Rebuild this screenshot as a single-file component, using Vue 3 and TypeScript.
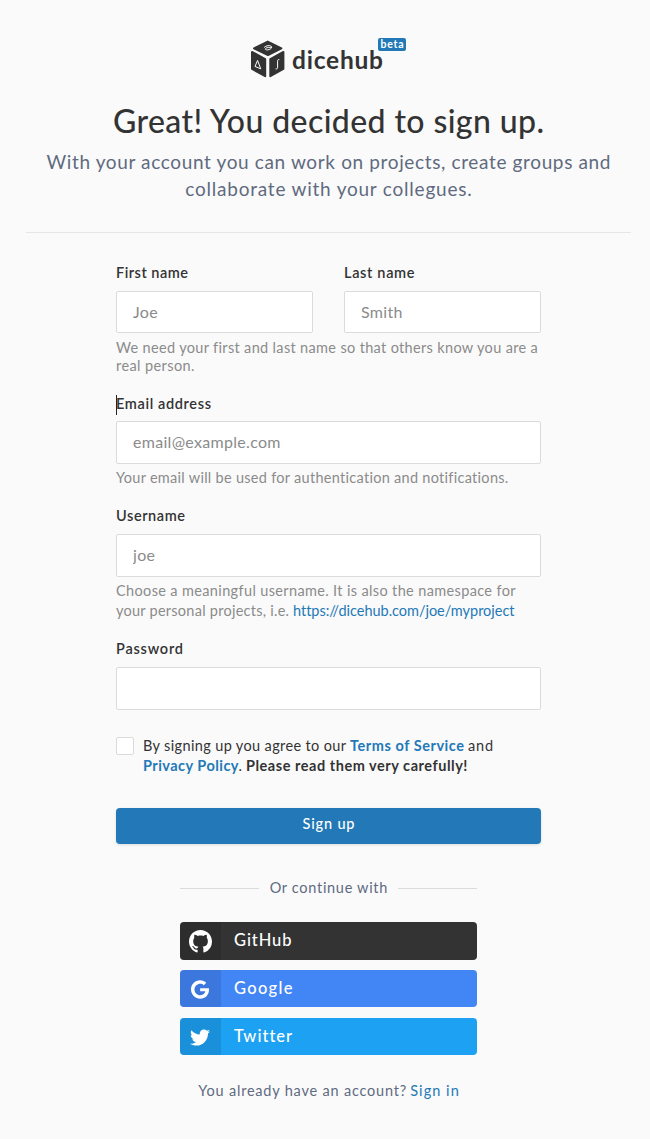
<script setup lang="ts">
import type { Directive } from 'vue'

// Tracks a single line of text out (or in) to a given width in px.
const vFit: Directive<HTMLElement, number> = {
  mounted(el, { value }) {
    const count = (el.textContent ?? '').length
    const natural = el.getBoundingClientRect().width
    if (count < 2 || !natural) return
    const spacing = (value - natural) / (count - 1)
    el.style.letterSpacing = `${spacing}px`
    el.style.marginRight = `${-spacing}px`
  },
}

interface Provider { name: string; key: string; width: number; box: string; path: string }

const providers: Provider[] = [
  {
    name: 'GitHub', key: 'github', width: 57.5, box: '0 0 16 16',
    path: 'M8 0C3.58 0 0 3.58 0 8c0 3.54 2.29 6.53 5.47 7.59.4.07.55-.17.55-.38 0-.19-.01-.82-.01-1.49-2.01.37-2.53-.49-2.69-.94-.09-.23-.48-.94-.82-1.13-.28-.15-.68-.52-.01-.53.63-.01 1.08.58 1.23.82.72 1.21 1.87.87 2.33.66.07-.52.28-.87.51-1.07-1.78-.2-3.64-.89-3.64-3.95 0-.87.31-1.59.82-2.15-.08-.2-.36-1.02.08-2.12 0 0 .67-.21 2.2.82.64-.18 1.32-.27 2-.27s1.36.09 2 .27c1.53-1.04 2.2-.82 2.2-.82.44 1.1.16 1.92.08 2.12.51.56.82 1.27.82 2.15 0 3.07-1.87 3.75-3.65 3.95.29.25.54.73.54 1.48 0 1.07-.01 1.93-.01 2.2 0 .21.15.46.55.38A8.01 8.01 0 0 0 16 8c0-4.42-3.58-8-8-8z',
  },
  {
    name: 'Google', key: 'google', width: 58.5, box: '0 8 488 496',
    path: 'M488 261.8C488 403.3 391.1 504 248 504 110.8 504 0 393.2 0 256S110.8 8 248 8c66.8 0 123 24.5 166.3 64.9l-67.5 64.9C258.5 52.6 94.3 116.6 94.3 256c0 86.5 69.1 156.6 153.7 156.6 98.2 0 135-70.4 140.8-106.9H248v-85.3h236.1c2.3 12.7 3.9 24.9 3.9 41.4z',
  },
  {
    name: 'Twitter', key: 'twitter', width: 57.5, box: '0 48 512 416',
    path: 'M459.37 151.716c.325 4.548.325 9.097.325 13.645 0 138.72-105.583 298.558-298.558 298.558-59.452 0-114.68-17.219-161.137-47.106 8.447.974 16.568 1.299 25.34 1.299 49.055 0 94.213-16.568 130.274-44.832-46.132-.975-84.792-31.188-98.112-72.772 6.498.974 12.995 1.624 19.818 1.624 9.421 0 18.843-1.3 27.614-3.573-48.081-9.747-84.143-51.98-84.143-102.985v-1.299c13.969 7.797 30.214 12.67 47.431 13.319-28.264-18.843-46.781-51.005-46.781-87.391 0-19.492 5.197-37.36 14.294-52.954 51.655 63.675 129.3 105.258 216.365 109.807-1.624-7.797-2.599-15.918-2.599-24.04 0-57.828 46.782-104.934 104.934-104.934 30.213 0 57.502 12.67 76.67 33.137 23.715-4.548 46.456-13.32 66.599-25.34-7.798 24.366-24.366 44.833-46.132 57.827 21.117-2.273 41.584-8.122 60.426-16.243-14.292 20.791-32.161 39.308-52.628 54.253z',
  },
]
</script>

<template>
  <main class="page">
    <header class="header">
      <div class="brand">
        <svg class="cube" viewBox="0 0 36 40" width="36" height="40">
          <g fill="#333" stroke="#333" stroke-width="2" stroke-linejoin="round">
            <path d="M17.7 2.6 31.4 9.4 18 16 4 9.4Z" />
            <path d="M2 12.9 15.2 20.1V37.2L2 29.9Z" />
            <path d="M33.4 12.9 20.3 20.1V37.2L33.4 29.9Z" />
          </g>
          <g fill="none" stroke="#fff" stroke-width="1" stroke-linecap="round" stroke-linejoin="round">
            <path d="M14.4 8.2c1.5-1.7 5.4-2.1 6.9-.9 1.4 1.2-.8 3.2-3.6 3.6-2.3.2-3-.9-1.6-1.8 1.2-.7 3.3-.7 4.9-.3" />
            <path d="M7.4 21.8 5 27.4 10.4 29.7Z" />
            <path d="M29 20.6c-1.1-.3-1.4.4-1.4 1.5v6.1c0 1.3-.5 2-1.6 1.8" />
          </g>
        </svg>
        <span class="wordmark"><span v-fit="91" class="line">dicehub</span></span>
        <span class="beta"><span v-fit="23" class="line">beta</span></span>
      </div>
      <h1 class="title"><span v-fit="431" class="line">Great! You decided to sign up.</span></h1>
      <p class="subtitle">
        <span v-fit="564" class="line">With your account you can work on projects, create groups and</span><br>
        <span v-fit="286.5" class="line">collaborate with your collegues.</span>
      </p>
    </header>

    <form class="form" @submit.prevent>
      <div class="names">
        <div class="field">
          <label for="first"><span v-fit="72" class="line">First name</span></label>
          <input id="first" class="short" type="text" placeholder="Joe">
        </div>
        <div class="field">
          <label for="last"><span v-fit="70.5" class="line">Last name</span></label>
          <input id="last" class="short" type="text" placeholder="Smith">
        </div>
      </div>
      <p class="help tight">
        <span v-fit="421.5" class="line">We need your first and last name so that others know you are a</span><br>
        <span v-fit="78.5" class="line">real person.</span>
      </p>

      <div class="field email">
        <label for="email"><span v-fit="95" class="line">Email address</span></label>
        <i class="caret"></i>
        <input id="email" type="email" placeholder="email@example.com">
      </div>
      <p class="help"><span v-fit="393" class="line">Your email will be used for authentication and notifications.</span></p>

      <div class="field username">
        <label for="user"><span v-fit="69" class="line">Username</span></label>
        <input id="user" type="text" placeholder="joe">
      </div>
      <p class="help">
        <span v-fit="399.5" class="line">Choose a meaningful username. It is also the namespace for</span><br>
        <span class="row"><span v-fit="173" class="line">your personal projects, i.e.</span>
          <a v-fit="221" class="line">https://dicehub.com/joe/myproject</a></span>
      </p>

      <div class="field password">
        <label for="pass"><span v-fit="67" class="line">Password</span></label>
        <input id="pass" type="password">
      </div>

      <div class="terms">
        <span class="checkbox"></span>
        <div class="terms-text">
          <div class="row">
            <span v-fit="203" class="line">By signing up you agree to our</span>
            <a v-fit="114" class="line strong">Terms of Service</a>
            <span v-fit="25" class="line">and</span>
          </div>
          <div class="row">
            <span class="policy"><a v-fit="95.5" class="line strong">Privacy Policy</a><span>.</span></span>
            <span v-fit="221.5" class="line strong">Please read them very carefully!</span>
          </div>
        </div>
      </div>

      <button class="submit" type="submit"><span v-fit="52" class="line">Sign up</span></button>
    </form>

    <section class="social">
      <div class="divider"><span v-fit="118" class="line">Or continue with</span></div>
      <button v-for="p in providers" :key="p.key" class="provider" :class="p.key" type="button">
        <span class="icon">
          <svg :viewBox="p.box"><path :d="p.path" fill="#fff" /></svg>
        </span>
        <span class="name"><span v-fit="p.width" class="line">{{ p.name }}</span></span>
      </button>
    </section>

    <footer class="footer row">
      <span v-fit="208" class="line">You already have an account?</span>
      <a v-fit="48.5" class="line">Sign in</a>
    </footer>
  </main>
</template>

<style>
body {
  background: #fafafa;
}
</style>

<style scoped>
.page {
  box-sizing: border-box;
  width: 650px;
  height: 1139px;
  padding: 38px 19px 0 26px;
  display: flex;
  flex-direction: column;
  align-items: center;
  overflow: hidden;
  background: #fafafa;
  color: #333;
  font-family: Lato, "Open Sans", sans-serif;
  font-size: 15px;
}
.line {
  display: inline-block;
  white-space: nowrap;
}
p, h1 {
  margin: 0;
}
a {
  color: #2379b7;
}
.strong {
  font-weight: 700;
}
.row {
  display: flex;
  gap: 4px;
}
.header {
  box-sizing: border-box;
  width: 605px;
  height: 195px;
  text-align: center;
  border-bottom: 1px solid #e6e6e6;
}
.brand {
  display: flex;
  width: 157px;
  height: 63px;
  margin: 0 auto;
}
.cube {
  margin-top: 1px;
  flex: none;
}
.wordmark {
  width: 92px;
  margin-left: 6px;
  flex: none;
  font-size: 24.5px;
  line-height: 43px;
  font-weight: 700;
  text-align: left;
}
.beta {
  flex: none;
  width: 28px;
  height: 13px;
  margin-left: -6px;
  border-radius: 2px;
  background: #2379b7;
  color: #fff;
  font-size: 10.5px;
  line-height: 12px;
  font-weight: 700;
  text-align: center;
}
.title {
  height: 47px;
  font-size: 32px;
  line-height: 40px;
  font-weight: 500;
}
.subtitle {
  color: #5f6a80;
  font-size: 19px;
  line-height: 27px;
}
.form {
  width: 425px;
  margin-top: 29px;
}
.names {
  display: flex;
  justify-content: space-between;
}
.names .field {
  width: 197px;
}
.field {
  position: relative;
}
label {
  box-sizing: border-box;
  display: block;
  height: 29px;
  padding-top: 1px;
  font-size: 14.5px;
  line-height: 20px;
  font-weight: 600;
}
input {
  box-sizing: border-box;
  display: block;
  width: 100%;
  height: 43px;
  padding: 0 16px 2px;
  border: 1px solid #dbdbdb;
  border-radius: 2px;
  background: #fff;
  font: 16px Lato, "Open Sans", sans-serif;
  letter-spacing: .3px;
  outline: none;
}
input.short {
  height: 42px;
}
input::placeholder {
  color: #8b8b8b;
  opacity: 1;
}
.email label {
  height: 28px;
}
.caret {
  position: absolute;
  left: 0;
  top: 2px;
  width: 1px;
  height: 20px;
  background: #222;
}
.help {
  margin-top: 4px;
  color: #8b8b8b;
  font-size: 14.5px;
  line-height: 20px;
}
.help.tight {
  margin-top: 6px;
  line-height: 18px;
}
.email {
  margin-top: 18px;
}
.username, .password {
  margin-top: 17px;
}
.terms {
  display: flex;
  margin-top: 26px;
  font-size: 14.5px;
  line-height: 20px;
}
.checkbox {
  box-sizing: border-box;
  width: 18px;
  height: 18px;
  margin: 1px 9px 0 0;
  border: 1px solid #dbdbdb;
  border-radius: 2px;
  background: #fff;
}
.submit {
  display: block;
  width: 425px;
  height: 36px;
  margin-top: 32px;
  padding: 0 0 4px;
  border: 0;
  border-radius: 4px;
  background: #2379b7;
  box-shadow: 0 1px 3px rgba(0, 0, 0, .12);
  color: #fff;
  font: 500 14.5px/20px Lato, "Open Sans", sans-serif;
}
.social {
  width: 297px;
  margin-top: 34px;
}
.divider {
  display: flex;
  align-items: center;
  gap: 11px;
  height: 20px;
  margin-bottom: 24px;
  color: #5f6a80;
  font-size: 14.5px;
  line-height: 18px;
}
.divider::before, .divider::after {
  content: "";
  flex: 1;
  height: 1px;
  margin-top: 1px;
  background: #dbdbdb;
}
.provider {
  display: flex;
  width: 297px;
  height: 37px;
  margin: 0 0 11px;
  padding: 0;
  border: 0;
  border-radius: 4px;
  overflow: hidden;
  color: #fff;
  font: 500 16.5px/36px Lato, "Open Sans", sans-serif;
}
.icon {
  box-sizing: border-box;
  display: flex;
  align-items: center;
  justify-content: center;
  width: 41px;
  height: 100%;
  padding: 1px 1px 0 0;
  background: rgba(0, 0, 0, .1);
}
.name {
  margin-left: 13px;
}
.github {
  height: 38px;
  margin-bottom: 10px;
  background: #333;
}
.google {
  background: #4285f5;
}
.twitter {
  margin-bottom: 0;
  background: #1da1f3;
}
.github svg {
  width: 23px;
  height: 23px;
}
.google svg {
  width: 18px;
  height: 19px;
}
.google .icon {
  padding-top: 2px;
}
.twitter svg {
  width: 20px;
  height: 17px;
}
.footer {
  margin-top: 26px;
  color: #5f6a80;
  font-size: 14.5px;
  line-height: 20px;
}
</style>
